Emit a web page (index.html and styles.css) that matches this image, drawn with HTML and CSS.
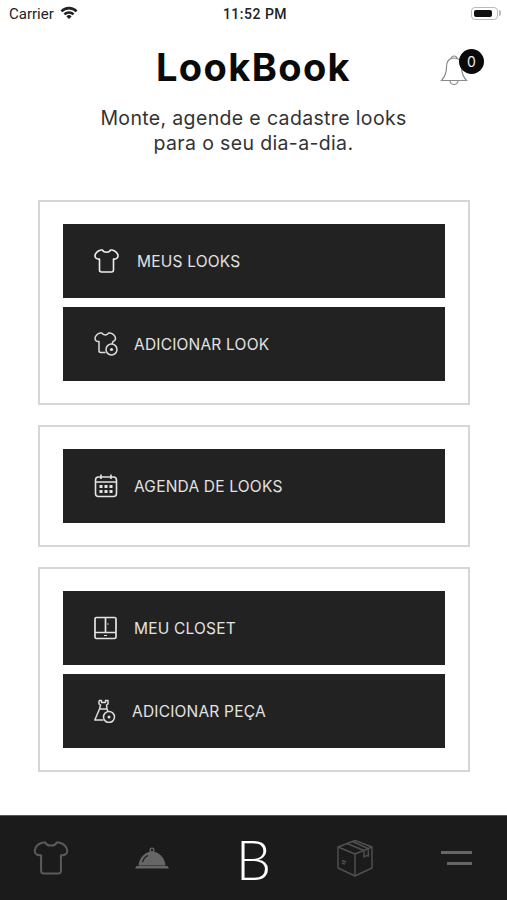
FILE: index.html
```html
<!DOCTYPE html>
<html lang="en">
<head>
    <meta charset="UTF-8">
    <meta name="viewport" content="width=device-width, initial-scale=1.0">
    <title>LookBook</title>
    <link rel="stylesheet" href="styles.css">
</head>
<body>
<div class="app">
    <div class="status-bar">
        <div class="status-left">
            <span>Carrier</span>
            <svg class="wifi" viewBox="0 0 18 13" width="18" height="13">
                <path d="M0.5 4.4 A12 12 0 0 1 17.5 4.4 L15.7 6.3 A9.5 9.5 0 0 0 2.3 6.3 Z" fill="#222"/>
                <path d="M3.5 7.5 A7.8 7.8 0 0 1 14.5 7.5 L12.7 9.3 A5.2 5.2 0 0 0 5.3 9.3 Z" fill="#222"/>
                <path d="M6.4 10.4 A3.7 3.7 0 0 1 11.6 10.4 L9 13 Z" fill="#222"/>
            </svg>
        </div>
        <span class="status-time">11:52 PM</span>
        <div class="battery"><div class="battery-level"></div></div>
    </div>

    <div class="header">
        <h1>LookBook</h1>
        <div class="bell">
            <svg viewBox="0 0 28 36" width="28" height="36" fill="none" stroke="#8a8a8a" stroke-width="1.2">
                <path d="M11 7 A3 3 0 1 1 17 7"/>
                <path d="M14 6 C8 6 6.5 10.5 6.5 15 C6.5 21 5.5 24 1.5 28.5 L26.5 28.5 C22.5 24 21.5 21 21.5 15 C21.5 10.5 20 6 14 6 Z"/>
                <path d="M10 28.5 A4 4 0 0 0 18 28.5"/>
            </svg>
            <span class="badge">0</span>
        </div>
    </div>

    <p class="subtitle">Monte, agende e cadastre looks<br>para o seu dia-a-dia.</p>

    <div class="cards">
        <div class="card">
            <a href="#" class="menu-btn wide-gap">
                <svg class="btn-icon" viewBox="0 0 25 24" fill="none" stroke="#eee" stroke-width="1.6" stroke-linejoin="round">
                    <path d="M8.5 1 C9.5 4 15.5 4 16.5 1 L18 1 C21 1.500 24 4 24 7 C24 9 22 10.500 19.500 10 L19.500 21 C19.500 22.500 18.500 23 17.500 23 L7.500 23 C6.500 23 5.500 22.500 5.500 21 L5.500 10 C3 10.500 1 9 1 7 C1 4 4 1.500 7 1 Z"/>
                </svg>
                MEUS LOOKS
            </a>
            <a href="#" class="menu-btn">
                <svg class="btn-icon" viewBox="0 0 25 24" fill="none" stroke="#ddd" stroke-width="1.5" stroke-linejoin="round">
                    <path d="M11.500 20.500 L7 20.500 C6 20.500 5 20 5 19 L5 9.500 C3 10 1 8.500 1 6.500 C1 4 3.500 1.500 6.500 1 L8 1 C9 3.500 13.500 3.500 14.500 1 L16 1 C19 1.500 21.500 4 21.500 6.500 C21.500 8 20.500 9 19 9.500 L18 12"/>
                    <circle cx="17.500" cy="17.500" r="5.500"/>
                    <circle cx="17.500" cy="17.500" r="1.600" fill="#ddd" stroke="none"/>
                </svg>
                ADICIONAR LOOK
            </a>
        </div>
        <div class="card">
            <a href="#" class="menu-btn">
                <svg class="btn-icon" viewBox="0 0 25 24" fill="none" stroke="#e4e4e4" stroke-width="1.6">
                    <rect x="1.500" y="3" width="21" height="19.500" rx="3"/>
                    <path d="M1.500 8 L22.500 8 M7 0.500 L7 5 M17 0.500 L17 5"/>
                    <path d="M5.500 12.500 h3 M10.500 12.500 h3 M15.500 12.500 h3 M5.500 17.500 h3 M10.500 17.500 h3 M15.500 17.500 h3" stroke-width="3"/>
                </svg>
                AGENDA DE LOOKS
            </a>
        </div>
        <div class="card">
            <a href="#" class="menu-btn">
                <svg class="btn-icon" viewBox="0 0 25 24" fill="none" stroke="#e4e4e4" stroke-width="1.7">
                    <rect x="1" y="1.500" width="21" height="21" rx="1.500"/>
                    <path d="M1 16.500 L22 16.500 M11.500 1.500 L11.500 16.500"/>
                    <path d="M10 19.500 L13 19.500" stroke-width="1"/>
                    <circle cx="14" cy="8" r="0.700" fill="#e4e4e4" stroke="none"/>
                </svg>
                MEU CLOSET
            </a>
            <a href="#" class="menu-btn narrow-gap">
                <svg class="btn-icon" viewBox="0 0 25 24" fill="none" stroke="#ddd" stroke-width="1.500" stroke-linejoin="round">
                    <path d="M5 1.500 L7.500 1.500 L7.500 3.500 L11.500 3.500 L11.500 1.500 L14 1.500 L14 5 L12.500 6 L13 10 L14 12.500"/>
                    <path d="M5 1.500 L5 5 L6.500 6 L5.500 10 L0.800 21 L9.500 21 M5.500 10 L13 10"/>
                    <circle cx="15" cy="18" r="5.500"/>
                    <circle cx="15" cy="18" r="1.500" fill="#ddd" stroke="none"/>
                </svg>
                ADICIONAR PEÇA
            </a>
        </div>
    </div>

    <nav class="tab-bar">
        <a href="#" class="tab">
            <svg viewBox="0 0 25 24" width="36" height="34" fill="none" stroke="#5b5b5b" stroke-width="1.400" stroke-linejoin="round">
                <path d="M8.5 1 C9.5 4 15.5 4 16.500 1 L18 1 C21 1.500 24 4 24 7 C24 9 22 10.500 19.500 10 L19.500 21 C19.500 22.500 18.500 23 17.500 23 L7.500 23 C6.500 23 5.500 22.500 5.500 21 L5.500 10 C3 10.500 1 9 1 7 C1 4 4 1.500 7 1 Z"/>
            </svg>
        </a>
        <a href="#" class="tab">
            <svg viewBox="0 0 34 22" width="34" height="22">
                <circle cx="17" cy="3" r="1.900" fill="none" stroke="#666" stroke-width="1.400"/>
                <path d="M3.500 18.500 C4 11 10 4.500 17 4.500 C24 4.500 30 11 30.500 18.500 Z" fill="#666"/>
                <path d="M7.500 15 C8.500 12 10.500 9.500 13 8.500" fill="none" stroke="#1b1b1b" stroke-width="1.200"/>
                <path d="M1.500 19 L32.500 19 L34 21.500 L0 21.500 Z" fill="#666"/>
            </svg>
        </a>
        <a href="#" class="tab tab-logo">B</a>
        <a href="#" class="tab">
            <svg viewBox="0 0 36 38" width="36" height="38" fill="none" stroke="#505050" stroke-width="1.4" stroke-linejoin="round">
                <path d="M18 1.500 L35 8 L35 29 L18 37 L1 29 L1 8 Z"/>
                <path d="M1 8 L18 15 L35 8 M18 15 L18 37"/>
                <path d="M10 4.500 L27 11.500 M15.500 2.500 L31 9.500 M27 11.500 L27 18 L29.500 16.500 L31.500 17 L31 9.500"/>
                <path d="M5 21.500 L9 23 M5 24 L8 25.200"/>
            </svg>
        </a>
        <a href="#" class="tab">
            <div class="menu-lines">
                <div class="menu-line"></div>
                <div class="menu-line short"></div>
            </div>
        </a>
    </nav>
</div>
</body>
</html>
```

FILE: styles.css
```css
* {
    margin: 0;
    padding: 0;
    box-sizing: border-box;
}

body {
    background-color: white;
    font-family: Inter, "Liberation Sans", sans-serif;
}

a {
    text-decoration: none;
}

.app {
    width: 507px;
    height: 900px;
    display: flex;
    flex-direction: column;
    overflow: hidden;
}

/* status bar */
.status-bar {
    height: 27px;
    padding: 0 6px 0 9px;
    display: grid;
    grid-template-columns: 1fr auto 1fr;
    align-items: center;
    font-family: Roboto, sans-serif;
    font-size: 15px;
    color: #222;
}

.status-left {
    display: flex;
    align-items: center;
    gap: 6px;
}

.wifi {
    margin-top: -2px;
}

.status-time {
    font-size: 14px;
    font-weight: 500;
    letter-spacing: 0.5px;
}

.battery {
    justify-self: end;
    position: relative;
    width: 27px;
    height: 13px;
    margin-right: 3px;
    padding: 2px 5px 2px 2px;
    border: 1.5px solid #bbb;
    border-radius: 4px;
}

.battery::after {
    content: "";
    position: absolute;
    right: -4px;
    top: 2px;
    width: 2px;
    height: 6px;
    background-color: #bbb;
    border-radius: 0 2px 2px 0;
}

.battery-level {
    height: 100%;
    background-color: #111;
    border-radius: 2px;
}

/* header */
.header {
    height: 47px;
    margin-top: 16px;
    position: relative;
    display: flex;
    justify-content: center;
    align-items: center;
}

h1 {
    font-size: 38px;
    font-weight: 700;
    letter-spacing: 1.4px;
    color: #0a0a0a;
}

.bell {
    position: absolute;
    left: 440px;
    top: 9px;
}

.badge {
    position: absolute;
    left: 19px;
    top: -3px;
    width: 25px;
    height: 25px;
    border-radius: 50%;
    background-color: #0a0a0a;
    color: #eee;
    font-size: 14px;
    display: flex;
    align-items: center;
    justify-content: center;
}

.subtitle {
    margin-top: 16px;
    text-align: center;
    font-size: 19.5px;
    line-height: 25px;
    letter-spacing: 0.35px;
    color: #333;
}

/* menu cards */
.cards {
    margin: 44px 37px 0 38px;
    display: flex;
    flex-direction: column;
    gap: 20px;
}

.card {
    padding: 22px 23px;
    border: 2px solid #d6d6d6;
    display: flex;
    flex-direction: column;
    gap: 9px;
}

.menu-btn {
    height: 74px;
    padding-left: 31px;
    display: flex;
    align-items: center;
    gap: 15px;
    background-color: #222222;
    color: #e2e2e2;
    font-size: 15.5px;
    font-weight: 400;
    letter-spacing: 0.2px;
}

.menu-btn.wide-gap {
    gap: 18px;
}

.menu-btn.narrow-gap {
    gap: 13px;
}

.btn-icon {
    width: 25px;
    height: 24px;
    flex-shrink: 0;
}

/* bottom tabs */
.tab-bar {
    margin-top: auto;
    height: 85px;
    display: grid;
    grid-template-columns: repeat(5, 1fr);
    background-color: #1b1b1b;
    border-top: 1px solid #555;
}

.tab {
    display: flex;
    align-items: center;
    justify-content: center;
}

.tab-logo {
    font-family: Lato, sans-serif;
    font-size: 56px;
    font-weight: 300;
    color: white;
}

.menu-lines {
    width: 31px;
    display: flex;
    flex-direction: column;
    align-items: flex-end;
    gap: 8px;
}

.menu-line {
    width: 100%;
    height: 3px;
    background-color: #666;
}

.menu-line.short {
    width: 25px;
}
```
